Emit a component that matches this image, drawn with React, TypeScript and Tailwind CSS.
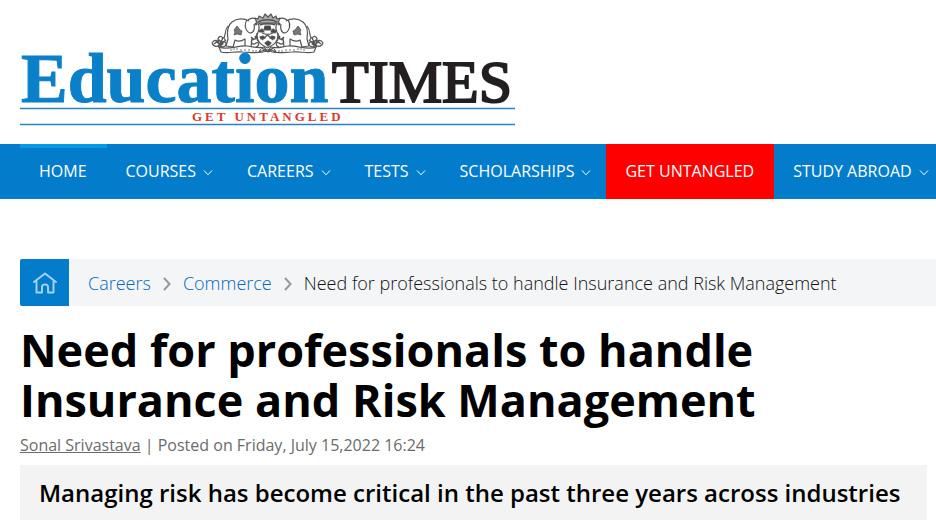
import React from 'react';

interface NavItem {
  label: string;
  active?: boolean;
  highlight?: boolean;
  hasMenu?: boolean;
}

const navItems: NavItem[] = [
  { label: 'HOME', active: true },
  { label: 'COURSES', hasMenu: true },
  { label: 'CAREERS', hasMenu: true },
  { label: 'TESTS', hasMenu: true },
  { label: 'SCHOLARSHIPS', hasMenu: true },
  { label: 'GET UNTANGLED', highlight: true },
  { label: 'STUDY ABROAD', hasMenu: true },
];

const crumbs = ['Careers', 'Commerce'];

// One elephant with its scroll; mirrored for the right side of the crest
function CrestHalf() {
  return (
    <g>
      <path d="M38 8 C33 5 26 5 21 9 C16 13 16 20 17 26 L15 33 L22 34 L24 27 C27 29 31 28 34 26 L34 34 L40 34 L41 25 C44 28 46 25 46 20" />
      <path d="M36 7 C33 11 34 18 39 20 C43 20 44 15 43 11 M37 7 C42 3 48 6 49 12 C50 17 46 20 46 25 C46 29 50 30 51 27" />
      <path d="M23 17 l3 -4 l3 4 l2 1 l-1 4 l-4 -1 l-3 1 l1 -3 z" fill="#777" strokeWidth="0.8" />
      <path d="M17 13 C13 18 15 22 13 25" />
      <circle cx="45" cy="11" r="0.800" fill="#333" />
      <path d="M1 30 C3 26 7 27 8 30 C9 34 3 35 1 30 M8 24 C11 22 13 26 10 28 C7 29 6 26 8 24 M9 30 C13 27 17 30 14 33 C11 35 8 33 9 30 M3 31 L8 27 L12 31 L7 34 M5 27 L9 32 L15 27 M12 24 L15 28 M4 29 L10 31" />
      <path d="M8 34 C16 38 27 32 36 33 C43 34 48 36 53 34 L56 38 C46 41 39 39 32 39 C23 38 18 41 10 39 Z" fill="#fff" />
      <path d="M20 36 v2 M23 35 v2 M26 35 v2 M30 36 v2 M34 36 v2 M38 36 v2 M42 37 v2 M45 37 v2" strokeWidth="0.8" />
      <path d="M42 26 C38 29 42 33 45 30 C48 28 49 33 45 34 M47 21 L44 24 L48 27 M50 22 L49 30 M40 24 L43 27" />
    </g>
  );
}

function Crest() {
  return (
    <g fill="none" stroke="#555" strokeWidth="1.200" strokeLinejoin="round">
      <CrestHalf />
      <g transform="translate(113 0) scale(-1 1)">
        <CrestHalf />
      </g>
      <path d="M47 11 C50 15 47 18 46 22 C46 30 51 32 56.500 35 C62 32 67 30 67 22 C66 18 63 15 66 11 Z" fill="#fff" />
      <path d="M46 10 L44 5 L47 6 L48 3 L52 5 L54 1 L57 4 L60 1 L62 5 L65 3 L66 6 L69 5 L67 10 Z" fill="#aaa" />
      <path d="M47 9 C52 6 61 6 66 9 M49 12 C53 10 60 10 64 12" strokeWidth="1.400" />
      <path d="M48 18 l3 -2 l2 3 h-4 z M60 19 l2 -3 l3 2 l-1 2 z M54 13 h5 l1 4 h-7 z M49 24 l3 -1 l2 2 l-4 1 z M59 25 l2 -2 l3 1 l-1 2 z M54 30 l3 -2 l3 2 l-3 3 z" fill="#444" />
      <path d="M51 20 C55 22 58 22 62 20 M51 27 L56.500 22 L62 27" />
      <path d="M49 34 C54 38 59 38 64 34 M51 34 L48 39 L54 37 L57 39 L60 37 L65 39 L62 34" />
    </g>
  );
}

function Logo() {
  return (
    <svg viewBox="0 0 496 114" className="block w-[496px] max-w-full" role="img" aria-label="Education Times">
      <g transform="translate(191 1)">
        <Crest />
      </g>
      <g className="font-['Liberation_Serif',serif]">
        <text x="1" y="90" fontSize="70" fontWeight="700" fill="#0a80c8" stroke="#0a80c8" strokeWidth="1">
          Education
        </text>
        <text x="312" y="90" fontSize="60" fill="#231f20" stroke="#231f20" strokeWidth="2">
          TIMES
        </text>
        <text x="172" y="109" fontSize="13" fontWeight="700" fill="#dd3a2c" className="tracking-[3px]">
          GET UNTANGLED
        </text>
      </g>
      <path d="M0 96.500 H495 M0 112.500 H495" stroke="#2a83bd" strokeWidth="1.300" />
    </svg>
  );
}

function MenuChevron() {
  return (
    <svg viewBox="0 0 10 6" className="mt-1 ml-[7px] h-[6px] w-[10px]" fill="none" stroke="currentColor" aria-hidden="true">
      <path d="M1 0.500 L5 4.800 L9 0.500" />
    </svg>
  );
}

function CrumbChevron() {
  return (
    <svg viewBox="0 0 8 14" className="mt-0.5 h-[14px] w-[8px]" fill="none" stroke="#999" strokeWidth="2" aria-hidden="true">
      <path d="M1 1 L6.500 7 L1 13" />
    </svg>
  );
}

function HomeIcon() {
  return (
    <svg viewBox="0 0 24 22" className="h-[22px] w-[24px]" fill="none" stroke="#a5d3f0" strokeWidth="1.900" strokeLinejoin="round" strokeLinecap="round" aria-hidden="true">
      <path d="M1 10 L12 1.500 L23 10 M3.500 9.500 V20.500 H9 V15 C9 11.500 15 11.500 15 15 V20.500 H20.500 V9.500" />
    </svg>
  );
}

export default function App() {
  return (
    <div className="overflow-x-hidden bg-white pb-3 font-['Open_Sans',sans-serif] text-black">
      <header>
        <a href="#" className="block px-5 pt-3 pb-[18px]">
          <Logo />
        </a>
        <nav className="bg-[#047ccc] pl-5">
          <ul className="flex">
            {navItems.map((item) => (
              <li key={item.label} className={item.highlight ? 'shrink-0 bg-[#ff0000]' : 'shrink-0'}>
                <a
                  href="#"
                  className={`flex h-[55px] items-center border-t-4 pb-1.5 pl-[19px] text-base font-medium whitespace-nowrap text-white ${
                    item.active ? 'border-[#039be5]' : 'border-transparent'
                  } ${item.hasMenu ? 'pr-[15px]' : 'pr-5'}`}
                >
                  {item.label}
                  {item.hasMenu && <MenuChevron />}
                </a>
              </li>
            ))}
          </ul>
        </nav>
      </header>

      <main className="pt-[60px] pl-5">
        <nav aria-label="Breadcrumb" className="flex h-[47px] items-center bg-[#f4f5f7]">
          <a href="#" aria-label="Home" className="flex h-full w-[49px] items-center justify-center rounded-l-xs bg-[#047ccc]">
            <HomeIcon />
          </a>
          <ol className="flex items-center gap-3 pl-[19px] text-lg font-light whitespace-nowrap">
            {crumbs.map((crumb) => (
              <li key={crumb} className="flex items-center gap-3">
                <a href="#" className="text-[#0068bd]">{crumb}</a>
                <CrumbChevron />
              </li>
            ))}
            <li className="text-[#111]">Need for professionals to handle Insurance and Risk Management</li>
          </ol>
        </nav>

        <article className="pr-[9px]">
          <h1 className="mt-[19px] max-w-[800px] text-[45px] leading-[50px] font-bold">
            Need for professionals to handle Insurance and Risk Management
          </h1>
          <p className="mt-2 text-base text-[#6b6b6b]">
            <a href="#" className="underline">Sonal Srivastava</a> | Posted on Friday, July 15,2022 16:24
          </p>
          <h2 className="mt-2 bg-[#f3f3f3] px-[19px] py-3 text-2xl leading-[31px] font-semibold">
            Managing risk has become critical in the past three years across industries
          </h2>
        </article>
      </main>
    </div>
  );
}
